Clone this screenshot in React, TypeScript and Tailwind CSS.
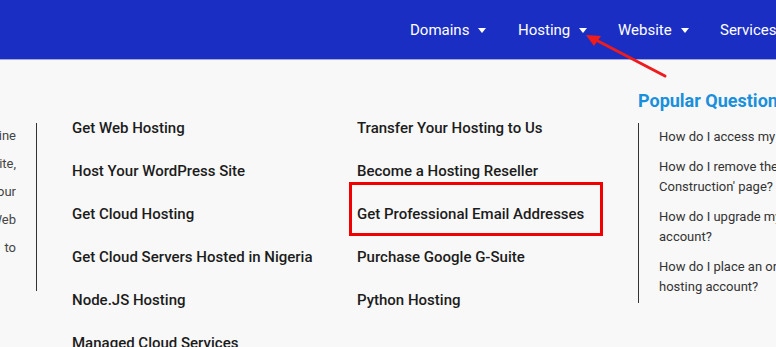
import React from "react";

const Caret = () => (
  <svg width="8" height="5" viewBox="0 0 8 5" className="ml-[9px] mt-[1px]">
    <path d="M0 0 L8 0 L4 5 Z" fill="#ffffff" />
  </svg>
);

const NavItem = ({ label, w }: { label: string; w: string }) => (
  <div className={`flex shrink-0 items-center ${w}`}>
    <span>{label}</span>
    <Caret />
  </div>
);

export default function App() {
  const col1 = [
    "Get Web Hosting",
    "Host Your WordPress Site",
    "Get Cloud Hosting",
    "Get Cloud Servers Hosted in Nigeria",
    "Node.JS Hosting",
    "Managed Cloud Services",
  ];
  const col2 = [
    "Transfer Your Hosting to Us",
    "Become a Hosting Reseller",
    "Get Professional Email Addresses",
    "Purchase Google G-Suite",
    "Python Hosting",
  ];
  const questions: string[][] = [
    ["How do I access my cPanel?"],
    ["How do I remove the 'Under", "Construction' page?"],
    ["How do I upgrade my hosting", "account?"],
    ["How do I place an order for a", "hosting account?"],
  ];
  const leftLines = ["online", "website,", "your", "Web", "to"];

  return (
    <div
      className="relative w-[776px] h-[347px] overflow-hidden bg-[#f8f8f8]"
      style={{ fontFamily: "Roboto, 'Noto Sans', sans-serif" }}
    >
      {/* Header */}
      <div className="h-[60px] bg-[#1b2ec4] border-b border-[#a3a8d9] flex items-center text-white text-[15px] whitespace-nowrap">
        <div className="flex shrink-0 items-center pl-[410px] pt-[1px]">
          <NavItem label="Domains" w="w-[108px]" />
          <NavItem label="Hosting" w="w-[100px]" />
          <NavItem label="Website" w="w-[102px]" />
          <NavItem label="Services" w="w-[100px]" />
        </div>
      </div>

      {/* Body */}
      <div className="flex">
        {/* Left partial column */}
        <div className="shrink-0 w-[37px] mt-[63px] h-[168px] border-r border-[#333] flex justify-end pr-[20px]">
          <div className="w-[17px] overflow-hidden flex flex-col items-end text-[13px] leading-[28px] text-[#444] -mt-[1px]">
            {leftLines.map((l) => (
              <div key={l} className="whitespace-nowrap">
                {l}
              </div>
            ))}
          </div>
        </div>

        {/* Column 1 */}
        <div className="shrink-0 ml-[35px] w-[285px] mt-[47px] flex flex-col text-[15px] font-medium text-[#1c1c1c]">
          {col1.map((t) => (
            <div key={t} className="h-[43px] leading-[43px] whitespace-nowrap">
              {t}
            </div>
          ))}
        </div>

        {/* Column 2 */}
        <div className="shrink-0 relative w-[281px] mt-[47px] flex flex-col text-[15px] font-medium text-[#1c1c1c]">
          {col2.map((t) => (
            <div key={t} className="h-[43px] leading-[43px] whitespace-nowrap">
              {t}
            </div>
          ))}
          <div className="absolute left-[-8px] top-[75px] w-[254px] h-[54px] border-[3px] border-[#f00000]" />
        </div>

        {/* Column 3 */}
        <div className="shrink-0 w-[200px] mt-[29px] flex flex-col">
          <div className="text-[18px] font-bold text-[#1a8fdc] leading-[24px] whitespace-nowrap">
            Popular Questions
          </div>
          <div className="mt-[10px] h-[180px] border-l border-[#333] pl-[20px] pt-[4px] text-[13px] leading-[20px] text-[#333]">
            {questions.map((q, i) => (
              <div key={i} className="mb-[10px]">
                {q.map((l) => (
                  <div key={l} className="whitespace-nowrap">
                    {l}
                  </div>
                ))}
              </div>
            ))}
          </div>
        </div>
      </div>

      {/* Red arrow annotation */}
      <svg
        className="absolute left-0 top-0 pointer-events-none"
        width="776"
        height="347"
        viewBox="0 0 776 347"
      >
        <line x1="665" y1="76" x2="596" y2="40" stroke="#ee1c1c" strokeWidth="3" strokeLinecap="round" />
        <path d="M586 35 L601 36 L594 46 Z" fill="#ee1c1c" />
      </svg>
    </div>
  );
}
